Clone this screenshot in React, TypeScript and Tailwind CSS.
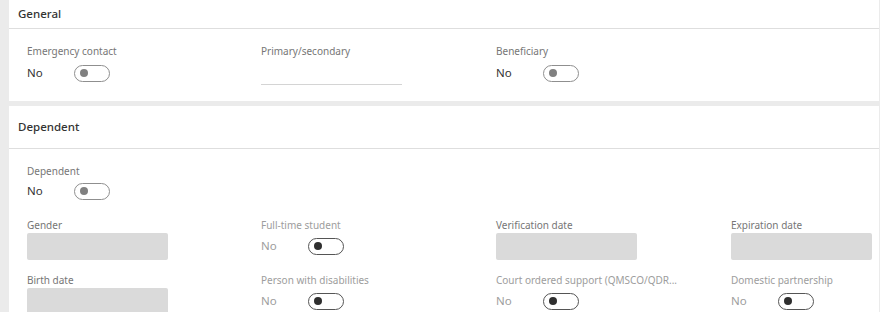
const font = { fontFamily: '"Noto Sans", "Open Sans", sans-serif' };

const Toggle = ({ dark }: { dark?: boolean }) => (
  <span
    className={`relative inline-block h-[17px] w-[36px] rounded-full border bg-white ${
      dark ? "border-[#555]" : "border-[#8f8f8f]"
    }`}
  >
    <span
      className={`absolute left-[5px] top-[3.5px] h-[8px] w-[8px] rounded-full ${
        dark ? "bg-[#2f2f2f]" : "bg-[#808080]"
      }`}
    />
  </span>
);

const Label = ({ children, faint }: { children: React.ReactNode; faint?: boolean }) => (
  <div
    className={`h-[14px] whitespace-nowrap text-[10px] leading-[14px] ${
      faint ? "text-[#9d9d9d]" : "text-[#767676]"
    }`}
  >
    {children}
  </div>
);

const ToggleField = ({
  label,
  disabled,
  gap = "mt-[3px]",
}: {
  label: string;
  disabled?: boolean;
  gap?: string;
}) => (
  <div>
    <Label faint={disabled}>{label}</Label>
    <div className={`flex h-[24px] items-center ${gap}`}>
      <span
        className={`w-[47px] text-[11.5px] ${disabled ? "text-[#9d9d9d]" : "text-[#333]"}`}
      >
        No
      </span>
      <Toggle dark={disabled} />
    </div>
  </div>
);

const BoxField = ({ label }: { label: string }) => (
  <div>
    <Label>{label}</Label>
    <div className="mt-[1px] h-[27px] w-[141px] rounded-[2px] bg-[#dadada]" />
  </div>
);

export default function App() {
  return (
    <div style={font} className="h-[312px] overflow-hidden bg-[#ebebeb] pl-[9px] pr-[1px]">
      <section className="h-[101px] bg-white">
        <header className="flex h-[29px] items-center border-b border-[#dedede] px-[9px] text-[11.5px] font-medium text-[#333]">
          General
        </header>
        <div className="grid grid-cols-[234px_235px_235px_1fr] pl-[18px] pt-[15px]">
          <ToggleField label="Emergency contact" />
          <div>
            <Label>Primary/secondary</Label>
            <div className="mt-[3px] h-[24px] w-[141px] border-b border-[#d4d4d4]" />
          </div>
          <ToggleField label="Beneficiary" />
        </div>
      </section>

      <section className="mt-[5px] h-[206px] bg-white">
        <header className="flex h-[43px] items-center border-b border-[#dedede] px-[9px] text-[11.5px] font-medium text-[#333]">
          Dependent
        </header>
        <div className="pl-[18px] pt-[15px]">
          <ToggleField label="Dependent" gap="mt-[1px]" />
          <div className="mt-[15px] grid grid-cols-[234px_235px_235px_1fr] gap-y-[13px]">
            <BoxField label="Gender" />
            <ToggleField label="Full-time student" disabled gap="mt-[2px]" />
            <BoxField label="Verification date" />
            <BoxField label="Expiration date" />
            <BoxField label="Birth date" />
            <ToggleField label="Person with disabilities" disabled gap="mt-[2px]" />
            <ToggleField label="Court ordered support (QMSCO/QDR..." disabled gap="mt-[2px]" />
            <ToggleField label="Domestic partnership" disabled gap="mt-[2px]" />
          </div>
        </div>
      </section>
    </div>
  );
}
